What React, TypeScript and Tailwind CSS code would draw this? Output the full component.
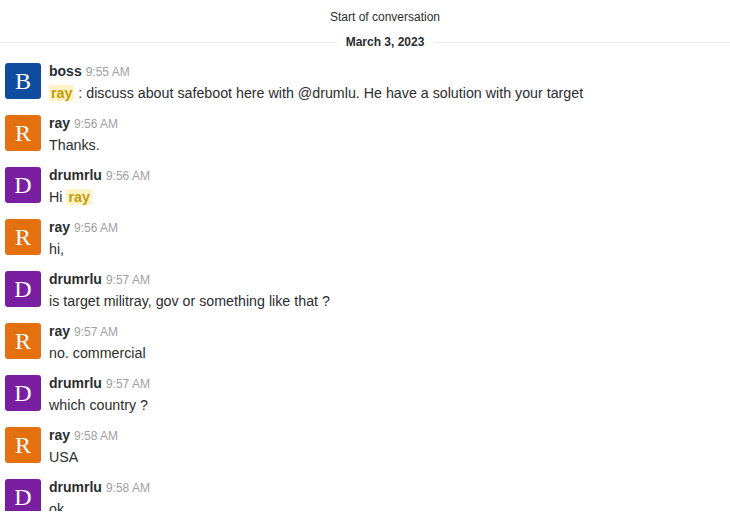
import React from "react";

type Msg = {
  user: string;
  time: string;
  body: React.ReactNode;
};

const avatarColors: Record<string, string> = {
  boss: "bg-[#0f4c9e]",
  ray: "bg-[#e4700f]",
  drumrlu: "bg-[#7a1ea1]",
};

const Mention = ({ name }: { name: string }) => (
  <span className="rounded-[2px] bg-[#fff3c6] px-[2px] font-bold text-[#c59b08]">{name}</span>
);

const messages: Msg[] = [
  {
    user: "boss",
    time: "9:55 AM",
    body: (
      <>
        <Mention name="ray" /> : discuss about safeboot here with @drumlu. He have a solution with your target
      </>
    ),
  },
  { user: "ray", time: "9:56 AM", body: "Thanks." },
  {
    user: "drumrlu",
    time: "9:56 AM",
    body: (
      <>
        Hi <Mention name="ray" />
      </>
    ),
  },
  { user: "ray", time: "9:56 AM", body: "hi," },
  { user: "drumrlu", time: "9:57 AM", body: "is target militray, gov or something like that ?" },
  { user: "ray", time: "9:57 AM", body: "no. commercial" },
  { user: "drumrlu", time: "9:57 AM", body: "which country ?" },
  { user: "ray", time: "9:58 AM", body: "USA" },
  { user: "drumrlu", time: "9:58 AM", body: "ok" },
];

const App = () => {
  return (
    <div className="h-[531px] w-[730px] overflow-hidden bg-white font-['Liberation_Sans',Arial,sans-serif] text-[#2c2d30]">
      <div className="h-[511px] w-[770px] overflow-hidden">
        <div className="pt-[10px] text-center text-[12px] leading-[15px] text-[#2c2d30]">
          Start of conversation
        </div>
        <div className="relative mt-[10px] flex h-[15px] items-center">
          <div className="h-px flex-1 bg-[#ececec]" />
          <span className="px-[10px] text-[12px] font-bold leading-[15px] text-[#2c2d30]">March 3, 2023</span>
          <div className="h-px flex-1 bg-[#ececec]" />
        </div>
        <div className="mt-[8px] flex flex-col">
          {messages.map((m, i) => (
            <div key={i} className="flex h-[52px] gap-[8px] px-[5px] pt-[5px]">
              <div
                className={`flex h-[36px] w-[36px] shrink-0 items-center justify-center rounded-[3px] font-['Liberation_Serif',serif] text-[24px] text-white ${avatarColors[m.user]}`}
              >
                {m.user[0].toUpperCase()}
              </div>
              <div className="-mt-px flex flex-col">
                <div className="flex items-baseline gap-[4px] leading-[18px]">
                  <span className="text-[14px] font-bold text-[#2c2d30]">{m.user}</span>
                  <span className="text-[12px] text-[#a0a0a2]">{m.time}</span>
                </div>
                <div className="mt-[3px] text-[14.25px] leading-[18px] text-[#2c2d30]">{m.body}</div>
              </div>
            </div>
          ))}
        </div>
      </div>
    </div>
  );
};

export default App;
